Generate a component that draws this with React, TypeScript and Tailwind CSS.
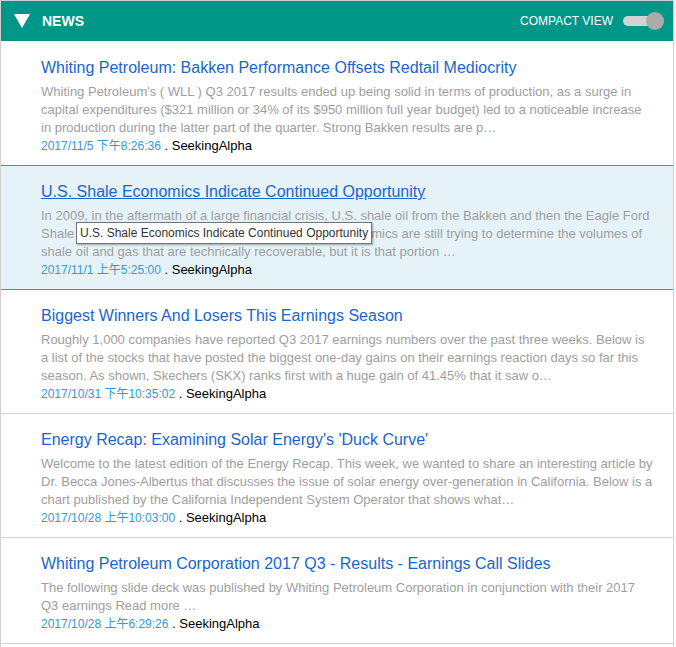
import React from 'react'

type NewsItem = {
  title: string
  summary: string
  date: string
  source: string
}

const news: NewsItem[] = [
  {
    title: 'Whiting Petroleum: Bakken Performance Offsets Redtail Mediocrity',
    summary:
      "Whiting Petroleum's ( WLL ) Q3 2017 results ended up being solid in terms of production, as a surge in capital expenditures ($321 million or 34% of its $950 million full year budget) led to a noticeable increase in production during the latter part of the quarter. Strong Bakken results are p…",
    date: '2017/11/5 下午8:26:36',
    source: 'SeekingAlpha',
  },
  {
    title: 'U.S. Shale Economics Indicate Continued Opportunity',
    summary:
      'In 2009, in the aftermath of a large financial crisis, U.S. shale oil from the Bakken and then the Eagle Ford Shale started to surge. Now, nearly a decade later, academics are still trying to determine the volumes of shale oil and gas that are technically recoverable, but it is that portion …',
    date: '2017/11/1 上午5:25:00',
    source: 'SeekingAlpha',
  },
  {
    title: 'Biggest Winners And Losers This Earnings Season',
    summary:
      'Roughly 1,000 companies have reported Q3 2017 earnings numbers over the past three weeks. Below is a list of the stocks that have posted the biggest one-day gains on their earnings reaction days so far this season. As shown, Skechers (SKX) ranks first with a huge gain of 41.45% that it saw o…',
    date: '2017/10/31 下午10:35:02',
    source: 'SeekingAlpha',
  },
  {
    title: "Energy Recap: Examining Solar Energy's 'Duck Curve'",
    summary:
      'Welcome to the latest edition of the Energy Recap. This week, we wanted to share an interesting article by Dr. Becca Jones-Albertus that discusses the issue of solar energy over-generation in California. Below is a chart published by the California Independent System Operator that shows what…',
    date: '2017/10/28 上午10:03:00',
    source: 'SeekingAlpha',
  },
  {
    title: 'Whiting Petroleum Corporation 2017 Q3 - Results - Earnings Call Slides',
    summary:
      'The following slide deck was published by Whiting Petroleum Corporation in conjunction with their 2017 Q3 earnings Read more …',
    date: '2017/10/28 上午6:29:26',
    source: 'SeekingAlpha',
  },
]

const HOVERED = 1

export default function App() {
  return (
    <div
      className="h-[647px] w-[674px] overflow-hidden border border-b-0 border-[#d0d0d0] bg-white"
      style={{ fontFamily: '"Liberation Sans", Arial, "Noto Sans CJK SC", sans-serif' }}
    >
      {/* Header */}
      <div className="flex h-[40px] items-center bg-[#009688] pl-[13px] pr-[8px] text-white">
        <svg width="16" height="15" viewBox="0 0 16 15" className="mr-[12px]">
          <polygon points="0,0 16,0 8,14" fill="#fff" />
        </svg>
        <span className="text-[14px] font-bold leading-none">NEWS</span>
        <div className="ml-auto flex items-center">
          <span className="mr-[10px] text-[12px] leading-none">COMPACT VIEW</span>
          <div className="relative h-[20px] w-[42px]">
            <div className="absolute left-0 top-[5px] h-[10px] w-[34px] rounded-full bg-[#d3d3d3]" />
            <div className="absolute left-[23px] top-[1px] h-[18px] w-[18px] rounded-full bg-[#ababab]" />
          </div>
        </div>
      </div>

      {/* List */}
      <div className="flex flex-col">
        {news.map((item, idx) => {
          const hovered = idx === HOVERED
          const borderTop =
            idx === 0
              ? 'border-transparent'
              : idx === HOVERED || idx === HOVERED + 1
                ? 'border-[#2a9cc8]'
                : 'border-[#d0d0d0]'
          return (
            <div
              key={item.title}
              className={`relative border-t pb-[10px] pl-[40px] pr-[20px] pt-[16px] ${borderTop} ${
                hovered ? 'bg-[#e5f3f9]' : 'bg-white'
              }`}
            >
              <div
                className={`text-[16px] leading-[20px] text-[#1a66cc] ${hovered ? 'underline' : ''}`}
              >
                {item.title}
              </div>
              <p className="mt-[5px] text-[13px] leading-[18px] text-[#9e9e9e]">{item.summary}</p>
              <div className="flex h-[18px] items-baseline whitespace-pre leading-[18px]">
                <span className="text-[12px] text-[#2e9bd6]">{item.date}</span>
                <span className="text-[13px] text-black"> . {item.source}</span>
              </div>

              {hovered && (
                <div className="absolute left-[75px] top-[56px] border border-[#767676] bg-white px-[3px] py-[2px] text-[12px] leading-[16px] text-[#333] shadow-[1px_1px_2px_rgba(0,0,0,0.35)]">
                  {item.title}
                </div>
              )}
            </div>
          )
        })}
        <div className="border-t border-[#d0d0d0]" />
      </div>
    </div>
  )
}
